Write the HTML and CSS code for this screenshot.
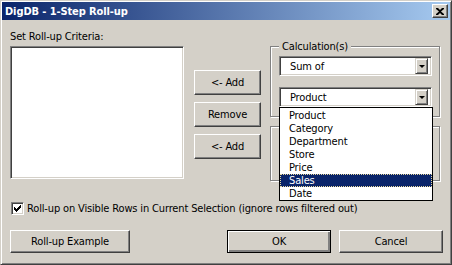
FILE: index.html
```html
<!DOCTYPE html>
<html lang="en">
<head>
  <meta charset="UTF-8" />
  <title>DigDB - 1-Step Roll-up</title>
  <link rel="stylesheet" href="styles.css">
</head>
<body>
  <div class="window">
    <div class="titlebar">
      <span class="title">DigDB - 1-Step Roll-up</span>
      <span class="close">
        <svg width="8" height="7" viewBox="0 0 8 7"><path d="M0 0h2l2 2 2-2h2v1L5 3.5 8 6v1H6L4 5 2 7H0V6l3-2.5L0 1z" fill="#000"/></svg>
      </span>
    </div>

    <div class="content">
      <div class="main">
        <div class="criteria">
          <div class="label">Set Roll-up Criteria:</div>
          <div class="listbox"></div>
        </div>

        <div class="actions">
          <button class="btn">&lt;- Add</button>
          <button class="btn">Remove</button>
          <button class="btn">&lt;- Add</button>
        </div>

        <div class="groups">
          <div class="group calc">
            <span class="legend">Calculation(s)</span>
            <div class="combo">
              <span class="value">Sum of</span>
              <span class="arrow"></span>
            </div>
            <div class="combo open">
              <span class="value">Product</span>
              <span class="arrow"></span>
              <ul class="dropdown">
                <li>Product</li>
                <li>Category</li>
                <li>Department</li>
                <li>Store</li>
                <li>Price</li>
                <li class="selected">Sales</li>
                <li>Date</li>
              </ul>
            </div>
          </div>
          <div class="group second"></div>
        </div>
      </div>

      <div class="check">
        <span class="box">
          <svg width="7" height="7" viewBox="0 0 7 7"><path d="M0 2h1v1h1v1h1V3h1V2h1V1h1V0h1v3H6v1H5v1H4v1H3v1H2V6H1V5H0z" fill="#000"/></svg>
        </span>
        <span>Roll-up on Visible Rows in Current Selection (ignore rows filtered out)</span>
      </div>

      <div class="footer">
        <button class="btn example">Roll-up Example</button>
        <button class="btn default">OK</button>
        <button class="btn cancel">Cancel</button>
      </div>
    </div>
  </div>
</body>
</html>
```

FILE: styles.css
```css
* {
  box-sizing: border-box;
}

body {
  margin: 0;
  background: #d4d0c8;
  font-family: "DejaVu Sans Condensed", "DejaVu Sans", sans-serif;
  font-stretch: condensed;
  font-size: 11px;
  letter-spacing: -0.15px;
  color: #000;
}

.window {
  width: 452px;
  height: 265px;
  padding: 1px;
  background: #d4d0c8;
  border: 1px solid;
  border-color: #d4d0c8 #404040 #404040 #d4d0c8;
  box-shadow: inset 1px 1px #fff, inset -1px -1px #808080;
}

/* barre de titre */
.titlebar {
  height: 18px;
  display: flex;
  align-items: center;
  justify-content: space-between;
  padding: 0 2px 0 3px;
  background: linear-gradient(to right, #0a246a, #a6caf0);
}

.title {
  color: #fff;
  font-weight: bold;
  line-height: 13px;
  letter-spacing: -0.1px;
}

.close {
  width: 16px;
  height: 14px;
  display: flex;
  align-items: center;
  justify-content: center;
  background: #d4d0c8;
  border: 1px solid;
  border-color: #fff #404040 #404040 #fff;
  box-shadow: inset -1px -1px #808080;
}

.content {
  padding: 10px 6px 0 8px;
}

.main {
  display: flex;
  height: 151px;
}

.criteria {
  width: 174px;
  flex-shrink: 0;
}

.label {
  line-height: 13px;
  height: 13px;
}

.listbox {
  margin-top: 3px;
  height: 133px;
  background: #fff;
  border: 1px solid;
  border-color: #808080 #fff #fff #808080;
  box-shadow: inset 1px 1px #404040, inset -1px -1px #d4d0c8;
}

.actions {
  width: 67px;
  flex-shrink: 0;
  margin-left: 10px;
  padding-top: 40px;
  display: flex;
  flex-direction: column;
  gap: 7px;
}

.btn {
  font: inherit;
  letter-spacing: inherit;
  color: #000;
  height: 25px;
  padding: 0;
  background: #d4d0c8;
  border: 1px solid;
  border-color: #fff #404040 #404040 #fff;
  box-shadow: inset -1px -1px #808080;
}

.groups {
  width: 170px;
  flex-shrink: 0;
  margin-left: 9px;
  padding-top: 16px;
  display: flex;
  flex-direction: column;
  gap: 9px;
}

.group {
  position: relative;
  border: 1px solid #808080;
  box-shadow: inset 1px 1px #fff, 1px 1px #fff;
}

.calc {
  height: 71px;
  padding: 9px 0 0 8px;
}

.second {
  height: 55px;
}

.legend {
  position: absolute;
  top: -7px;
  left: 8px;
  padding: 0 3px;
  line-height: 13px;
  background: #d4d0c8;
}

.combo {
  position: relative;
  width: 153px;
  height: 20px;
  display: flex;
  align-items: center;
  justify-content: space-between;
  padding: 0 2px 0 10px;
  background: #fff;
  border: 1px solid;
  border-color: #808080 #fff #fff #808080;
  box-shadow: inset 1px 1px #404040, inset -1px -1px #d4d0c8;
}

.combo + .combo {
  margin-top: 11px;
}

.arrow {
  width: 13px;
  height: 16px;
  margin-right: 1px;
  background: #d4d0c8;
  border: 1px solid;
  border-color: #d4d0c8 #404040 #404040 #d4d0c8;
  box-shadow: inset 1px 1px #fff, inset -1px -1px #808080;
  display: flex;
  align-items: center;
  justify-content: center;
}

.arrow::after {
  content: "";
  border-left: 3px solid transparent;
  border-right: 3px solid transparent;
  border-top: 3px solid #000;
  margin-top: 1px;
}

.dropdown {
  position: absolute;
  top: 19px;
  left: -1px;
  width: 154px;
  margin: 0;
  padding: 1px 0 0;
  list-style: none;
  background: #fff;
  border: 1px solid #000;
  z-index: 2;
}

.dropdown li {
  height: 13px;
  line-height: 13px;
  padding-left: 9px;
}

.dropdown .selected {
  background: #0a246a;
  color: #fff;
  outline: 1px dotted #e8d89c;
  outline-offset: -1px;
}

.check {
  margin-top: 21px;
  margin-left: 1px;
  display: flex;
  align-items: center;
  gap: 3px;
  height: 13px;
  line-height: 13px;
}

.box {
  width: 13px;
  height: 13px;
  display: flex;
  align-items: center;
  justify-content: center;
  background: #fff;
  border: 1px solid;
  border-color: #808080 #fff #fff #808080;
  box-shadow: inset 1px 1px #404040, inset -1px -1px #d4d0c8;
}

.footer {
  margin-top: 15px;
  display: flex;
  gap: 8px;
}

.footer .btn {
  height: 23px;
}

.example {
  width: 120px;
  margin-right: 89px;
}

.default,
.cancel {
  width: 104px;
}

.default {
  outline: 1px solid #000;
  outline-offset: -1px;
  box-shadow: inset 1px 1px #fff, inset -2px -2px #808080, inset -1px -1px #404040;
}
```
